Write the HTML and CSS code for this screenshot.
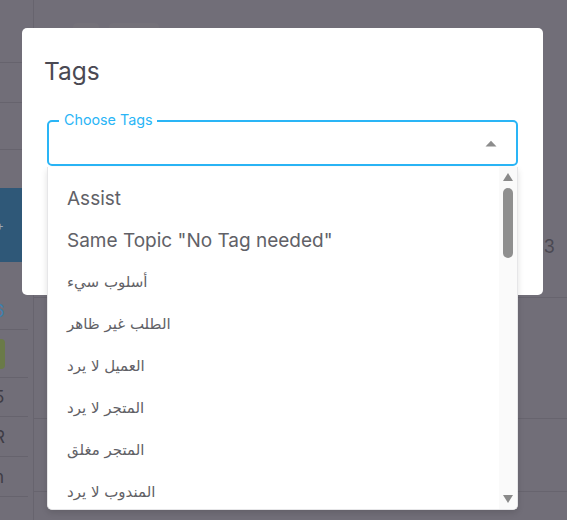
FILE: index.html
```html
<!DOCTYPE html>
<html lang="en">
<head>
<meta charset="utf-8">
<title>Tags</title>
<link rel="stylesheet" href="styles.css">
</head>
<body>
<div class="page">
  <aside class="side">
    <div class="srow h63 full"></div>
    <div class="srow h40 full"></div>
    <div class="srow h47 full"></div>
    <div class="sgap h38"></div>
    <div class="sblue"><span class="plus">+</span></div>
    <div class="srow h68 link"><span class="cut">6</span></div>
    <div class="srow h48"><span class="badge"></span></div>
    <div class="srow h39"><span class="cut">5</span></div>
    <div class="srow h40"><span class="cut">R</span></div>
    <div class="srow h40"><span class="cut">n</span></div>
    <div class="srow h40 last"><span class="cut">3</span></div>
  </aside>
  <main class="main">
    <div class="topbar">
      <span class="ghost g1"></span>
      <span class="ghost g2"></span>
    </div>
    <div class="mblock b1"><span class="num">33</span></div>
    <div class="mblock b2"></div>
    <div class="mblock b3"></div>
  </main>
</div>

<div class="dialog">
  <h2 class="title">Tags</h2>
  <div class="field">
    <span class="label">Choose Tags</span>
    <svg class="caret" width="12" height="7" viewBox="0 0 12 7"><path d="M0.5 6.5 L6 0.8 L11.5 6.5 Z" fill="#8c8c8c"/></svg>
  </div>
</div>

<div class="listbox">
  <ul class="items">
    <li>Assist</li>
    <li>Same Topic "No Tag needed"</li>
    <li class="ar">أسلوب سيء</li>
    <li class="ar">الطلب غير ظاهر</li>
    <li class="ar">العميل لا يرد</li>
    <li class="ar">المتجر لا يرد</li>
    <li class="ar">المتجر مغلق</li>
    <li class="ar">المندوب لا يرد</li>
  </ul>
  <div class="scroll">
    <svg class="sarrow" width="10" height="8" viewBox="0 0 10 8"><path d="M0 8 L5 0 L10 8 Z" fill="#8a8a8a"/></svg>
    <div class="thumb"></div>
    <div class="sfill"></div>
    <svg class="sarrow" width="10" height="8" viewBox="0 0 10 8"><path d="M0 0 L5 8 L10 0 Z" fill="#8a8a8a"/></svg>
  </div>
</div>
</body>
</html>
```

FILE: styles.css
```css
* { box-sizing: border-box; }
html, body {
  margin: 0;
  padding: 0;
  width: 567px;
  height: 520px;
  overflow: hidden;
  background: #716e78;
  font-family: "Inter", "DejaVu Sans", sans-serif;
}
.page {
  display: flex;
  height: 520px;
}
.side {
  width: 34px;
  flex: none;
  border-right: 1px solid #67646e;
  display: flex;
  flex-direction: column;
  overflow: hidden;
}
.side > div { flex: none; }
.srow {
  border-bottom: 1px solid #66636d;
  display: flex;
  align-items: center;
  color: #3e3c45;
  font-size: 17px;
  margin-right: 5px;
}
.srow.full { margin-right: 0; }
.srow.last { border-bottom: none; align-items: flex-end; }
.h63 { height: 63px; }
.h40 { height: 40px; }
.h47 { height: 47px; }
.h38 { height: 38px; }
.h68 { height: 68px; align-items: flex-end; padding-bottom: 8px; }
.h48 { height: 48px; }
.h39 { height: 39px; }
.sblue {
  height: 74px;
  background: #2f5878;
  color: #9aa7b5;
  display: flex;
  align-items: center;
  font-size: 12px;
  width: 60px;
}
.plus { margin-left: -4px; }
.link { color: #3d80b0; }
.cut { margin-left: -6px; }
.badge {
  display: block;
  width: 12px;
  height: 30px;
  margin-left: -7px;
  border-radius: 4px;
  background: #6a7a48;
}
.main {
  flex: 1;
  display: flex;
  flex-direction: column;
}
.main > div { flex: none; }
.topbar {
  height: 28px;
  display: flex;
  align-items: flex-end;
  gap: 10px;
  padding-left: 39px;
}
.ghost {
  display: block;
  height: 5px;
  background: #747179;
  border-radius: 4px 4px 0 0;
}
.g1 { width: 26px; }
.g2 { width: 50px; }
.mblock {
  border-bottom: 1px solid #67646e;
  display: flex;
  align-items: center;
  justify-content: flex-end;
}
.b1 { height: 270px; align-items: flex-start; padding-top: 208px; padding-right: 12px; }
.b2 { height: 121px; }
.b3 { height: 73px; }
.num { color: #4a4852; font-size: 18px; }

.dialog {
  position: absolute;
  left: 22px;
  top: 28px;
  width: 521px;
  height: 267px;
  background: #ffffff;
  border-radius: 5px;
  padding: 0 25px;
}
.title {
  margin: 0 0 0 -3px;
  padding-top: 29px;
  font-size: 24.5px;
  font-weight: 400;
  line-height: 28px;
  color: #4a4953;
}
.field {
  position: relative;
  margin-top: 35px;
  height: 46px;
  border: 2px solid #2ab5f6;
  border-radius: 5px;
  display: flex;
  align-items: center;
  justify-content: flex-end;
  padding-right: 19px;
}
.label {
  position: absolute;
  left: 10px;
  top: -11px;
  padding: 0 5px 0 5px;
  background: #ffffff;
  color: #2ab5f6;
  font-size: 14.3px;
  line-height: 18px;
}
.caret { display: block; }

.listbox {
  position: absolute;
  left: 47px;
  top: 167px;
  width: 471px;
  height: 343px;
  background: #ffffff;
  border: 1px solid #e6e6e8;
  border-top: none;
  border-radius: 0 0 5px 5px;
  box-shadow: 0 3px 6px rgba(0,0,0,0.12);
  display: flex;
  overflow: hidden;
}
.items {
  list-style: none;
  margin: 0;
  padding: 10px 0 0 19px;
  flex: 1;
  overflow: hidden;
}
.items li {
  height: 42px;
  display: flex;
  align-items: center;
  font-size: 19px;
  color: #616167;
  white-space: nowrap;
}
.items li.ar {
  font-family: "DejaVu Sans", sans-serif;
  font-size: 15px;
  direction: ltr;
  unicode-bidi: plaintext;
  color: #616166;
}
.scroll {
  width: 18px;
  background: #fafafa;
  display: flex;
  flex-direction: column;
  align-items: center;
  padding: 6px 0 6px 0;
}
.sarrow { display: block; flex: none; }
.thumb {
  margin-top: 7px;
  width: 10px;
  height: 70px;
  background: #8f8f8f;
  border-radius: 5px;
}
.sfill { flex: 1; }
```
